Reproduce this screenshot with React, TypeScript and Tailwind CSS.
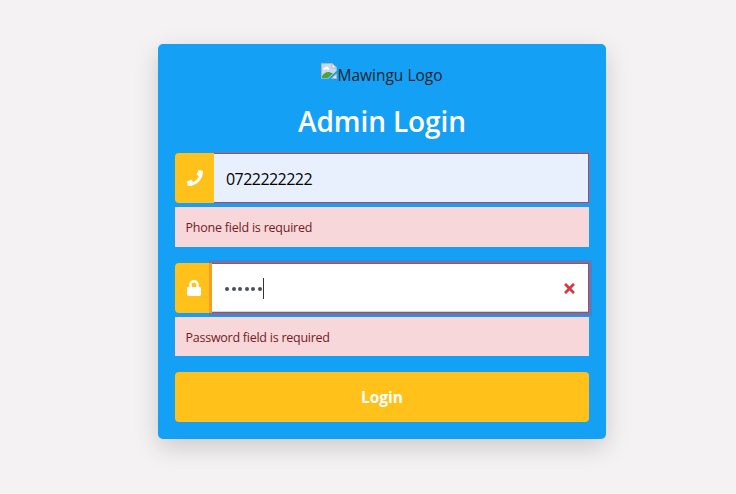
import React from "react";
import { FaPhone, FaLock, FaTimes } from "react-icons/fa";

function BrokenImage() {
  return (
    <svg width="16" height="16" viewBox="0 0 16 16" className="block shrink-0">
      <path d="M.5 .5H11L15.5 5V8L7.500 15.500H.5Z" fill="#c6d8f5" />
      <path d="M.5 15.500V.5H11L15.500 5V8" fill="none" stroke="#b4b4b4" />
      <path d="M11 .5V5H15.500Z" fill="#fff" stroke="#b4b4b4" />
      <path d="M2 6.500C2 5 3.500 4.500 4 5C4.500 3 7 3 7.500 5C8.500 5 8.500 6.500 8 6.500Z" fill="#fff" />
      <path d="M1 15V13C4 9 7 7.500 12 10.500L7 15Z" fill="#4da338" />
      <path d="M7.500 16L16 8V10L10 16Z" fill="#14a0f5" />
      <path d="M15.500 11V15.500H10.500Z" fill="#e8e8e8" stroke="#b4b4b4" />
    </svg>
  );
}

function FieldError({ children, className }: { children: React.ReactNode; className: string }) {
  return (
    <div className={`mt-1 flex items-center bg-[#f8d7da] pl-[10.500px] text-[12.500px] text-[#721c24] ${className}`}>
      {children}
    </div>
  );
}

export default function App() {
  return (
    <main className="flex h-[494px] w-full justify-center overflow-hidden bg-[#f4f2f3] pt-11 pl-7 font-['Open_Sans','Noto_Sans',sans-serif]">
      <section className="h-[395px] w-[448px] rounded-[5px] bg-[#14a0f5] px-[17px] shadow-[0_8px_24px_rgba(0,0,0,0.17)]">
        <div className="flex h-[61px] items-start justify-center pt-[19px]">
          <BrokenImage />
          <span className="text-[15.500px] leading-6 text-[#212529]">Mawingu Logo</span>
        </div>
        <h1 className="h-12 text-center text-[28px] leading-8 font-semibold tracking-[-0.1px] whitespace-nowrap text-white">Admin Login</h1>
        <div className="flex h-[50px]">
          <div className="flex w-[39px] items-center justify-center rounded-l bg-[#ffc11a] text-white">
            <FaPhone size={16} />
          </div>
          <div className="flex flex-1 items-center border border-l-0 border-[#dc3545] bg-[#e8f0fe] pt-px pl-3 text-[16px] tracking-[-0.55px] text-black">0722222222</div>
        </div>
        <FieldError className="h-10 pt-[3px] tracking-[-0.22px]">Phone field is required</FieldError>
        <div className="mt-4 flex h-[50px]">
          <div className="flex w-[37px] items-center justify-center rounded-l bg-[#ffc11a] text-white">
            <FaLock size={16} />
          </div>
          <div className="z-10 flex flex-1 items-center border border-l-0 border-[#dc3545] bg-white pr-[11px] pl-[13px] shadow-[0_0_0_3px_rgba(220,53,69,0.25),inset_0_-1px_0_#b5e0ea]">
            <div className="flex gap-[2.600px] pt-0.5 pr-px">
              {[0, 1, 2, 3, 4, 5].map((i) => (
                <span key={i} className="size-1 rounded-full bg-[#495057]" />
              ))}
            </div>
            <span className="h-[21px] w-px bg-[#333]" />
            <FaTimes size={15} className="ml-auto text-[#dc3545]" />
          </div>
        </div>
        <FieldError className="h-[39px] pt-[4px] tracking-[-0.25px]">Password field is required</FieldError>
        <button className="mt-4 flex h-[50px] w-full items-center justify-center rounded bg-[#ffc11a] pt-0.5 text-[15.500px] font-bold text-white">Login</button>
      </section>
    </main>
  );
}
